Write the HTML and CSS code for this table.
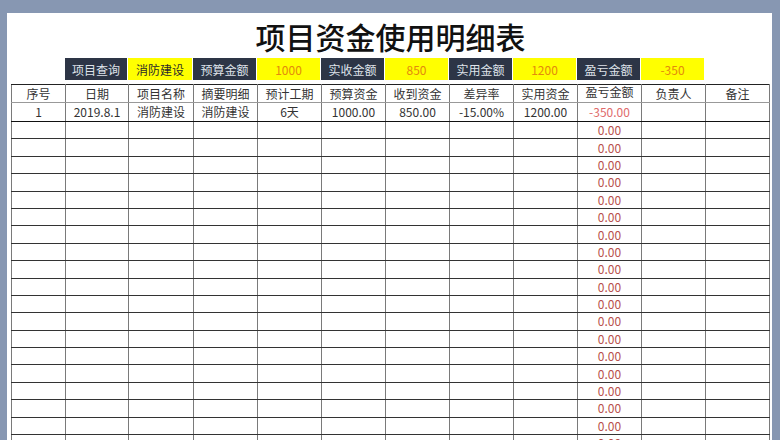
FILE: index.html
```html
<!DOCTYPE html>
<html lang="zh-CN">
<head>
<meta charset="utf-8">
<title>项目资金使用明细表</title>
<link rel="stylesheet" href="styles.css">
</head>
<body>
<div class="sheet">
  <h1 class="title">项目资金使用明细表</h1>
  <div class="content">
    <div class="infobar">
      <div class="info dark w63">项目查询</div>
      <div class="info yellow w65">消防建设</div>
      <div class="info dark">预算金额</div>
      <div class="info yellow num">1000</div>
      <div class="info dark">实收金额</div>
      <div class="info yellow num">850</div>
      <div class="info dark">实用金额</div>
      <div class="info yellow num">1200</div>
      <div class="info dark">盈亏金额</div>
      <div class="info yellow num">-350</div>
    </div>
    <table class="grid">
      <colgroup>
        <col class="c54"><col class="c63"><col class="c65"><col class="c64"><col class="c64"><col class="c64"><col class="c64"><col class="c64"><col class="c64"><col class="c64"><col class="c64"><col class="c64">
      </colgroup>
      <thead>
        <tr class="head">
          <th>序号</th><th>日期</th><th>项目名称</th><th>摘要明细</th><th>预计工期</th><th>预算资金</th><th>收到资金</th><th>差异率</th><th>实用资金</th><th class="up">盈亏金额</th><th>负责人</th><th>备注</th>
        </tr>
      </thead>
      <tbody>
        <tr class="first">
          <td>1</td><td>2019.8.1</td><td>消防建设</td><td>消防建设</td><td>6天</td><td>1000.00</td><td>850.00</td><td>-15.00%</td><td>1200.00</td><td class="neg">-350.00</td><td></td><td></td>
        </tr>
        <tr><td></td><td></td><td></td><td></td><td></td><td></td><td></td><td></td><td></td><td class="zero">0.00</td><td></td><td></td></tr>
        <tr><td></td><td></td><td></td><td></td><td></td><td></td><td></td><td></td><td></td><td class="zero">0.00</td><td></td><td></td></tr>
        <tr><td></td><td></td><td></td><td></td><td></td><td></td><td></td><td></td><td></td><td class="zero">0.00</td><td></td><td></td></tr>
        <tr><td></td><td></td><td></td><td></td><td></td><td></td><td></td><td></td><td></td><td class="zero">0.00</td><td></td><td></td></tr>
        <tr><td></td><td></td><td></td><td></td><td></td><td></td><td></td><td></td><td></td><td class="zero">0.00</td><td></td><td></td></tr>
        <tr><td></td><td></td><td></td><td></td><td></td><td></td><td></td><td></td><td></td><td class="zero">0.00</td><td></td><td></td></tr>
        <tr><td></td><td></td><td></td><td></td><td></td><td></td><td></td><td></td><td></td><td class="zero">0.00</td><td></td><td></td></tr>
        <tr><td></td><td></td><td></td><td></td><td></td><td></td><td></td><td></td><td></td><td class="zero">0.00</td><td></td><td></td></tr>
        <tr><td></td><td></td><td></td><td></td><td></td><td></td><td></td><td></td><td></td><td class="zero">0.00</td><td></td><td></td></tr>
        <tr><td></td><td></td><td></td><td></td><td></td><td></td><td></td><td></td><td></td><td class="zero">0.00</td><td></td><td></td></tr>
        <tr><td></td><td></td><td></td><td></td><td></td><td></td><td></td><td></td><td></td><td class="zero">0.00</td><td></td><td></td></tr>
        <tr><td></td><td></td><td></td><td></td><td></td><td></td><td></td><td></td><td></td><td class="zero">0.00</td><td></td><td></td></tr>
        <tr><td></td><td></td><td></td><td></td><td></td><td></td><td></td><td></td><td></td><td class="zero">0.00</td><td></td><td></td></tr>
        <tr><td></td><td></td><td></td><td></td><td></td><td></td><td></td><td></td><td></td><td class="zero">0.00</td><td></td><td></td></tr>
        <tr><td></td><td></td><td></td><td></td><td></td><td></td><td></td><td></td><td></td><td class="zero">0.00</td><td></td><td></td></tr>
        <tr><td></td><td></td><td></td><td></td><td></td><td></td><td></td><td></td><td></td><td class="zero">0.00</td><td></td><td></td></tr>
        <tr><td></td><td></td><td></td><td></td><td></td><td></td><td></td><td></td><td></td><td class="zero">0.00</td><td></td><td></td></tr>
        <tr><td></td><td></td><td></td><td></td><td></td><td></td><td></td><td></td><td></td><td class="zero">0.00</td><td></td><td></td></tr>
        <tr><td></td><td></td><td></td><td></td><td></td><td></td><td></td><td></td><td></td><td class="zero">0.00</td><td></td><td></td></tr>
      </tbody>
    </table>
  </div>
</div>
</body>
</html>
```
FILE: styles.css
```css
html, body {
  margin: 0;
  padding: 0;
  overflow: hidden;
  height: 440px;
}
body {
  background: #8797b2;
  font-family: "Noto Sans CJK SC", "Noto Sans", sans-serif;
  color: #333;
}
.sheet {
  background: #fff;
  margin: 13px 8px 0 7px;
  width: 765px;
  height: 460px;
}
.title {
  margin: 0;
  height: 45px;
  display: flex;
  align-items: center;
  justify-content: center;
  font-size: 30px;
  font-weight: 500;
  color: #111;
  letter-spacing: 0;
  padding-left: 2px;
}
.content {
  margin-left: 4px;
}
.infobar {
  display: flex;
  padding-left: 54px;
  height: 22px;
  margin-bottom: 4px;
}
.info {
  width: 64px;
  box-sizing: border-box;
  border-right: 1px solid #fff;
  display: flex;
  align-items: center;
  justify-content: center;
  font-size: 12px;
}
.info.w63 { width: 63px; }
.info.w65 { width: 65px; }
.dark {
  background: #2d3546;
  color: #dfe3ea;
}
.yellow {
  background: #ffff00;
  color: #2a2a2a;
}
.yellow.num {
  color: #e38a0c;
}
.grid {
  border-collapse: collapse;
  table-layout: fixed;
  width: 758px;
  border: 1px solid #222;
}
.c54 { width: 54px; }
.c63 { width: 63px; }
.c65 { width: 65px; }
.c64 { width: 64px; }
.grid th,
.grid td {
  padding: 0;
  font-size: 12px;
  font-weight: 400;
  text-align: center;
  line-height: 14px;
  border-left: 1px solid #7a7a7a;
  border-right: 1px solid #7a7a7a;
  border-top: 1px solid #333;
  border-bottom: 1px solid #333;
  color: #333;
  white-space: nowrap;
  overflow: hidden;
}
.grid tr.head th {
  border-bottom-color: #999;
  border-top-color: #222;
}
.grid tr.head { height: 18px; }
.grid tr.first { height: 19px; }
.grid tr.first td { border-bottom: 1px solid #111; }
.grid tbody tr { height: 17.4px; }
.grid th.up { vertical-align: top; }
.grid td.neg { color: #e06a6a; }
.grid td.zero { color: #b8504c; }
```
